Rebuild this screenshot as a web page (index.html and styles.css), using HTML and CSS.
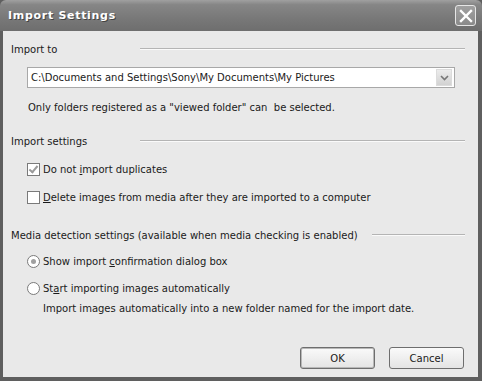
FILE: index.html
```html
<!DOCTYPE html>
<html lang="en">
<head>
    <meta charset="UTF-8">
    <title>Import Settings</title>
    <link rel="stylesheet" href="styles.css">
</head>
<body>
    <div class="window">
        <div class="title-bar">
            <span class="title">Import Settings</span>
            <span class="close-btn">
                <svg width="14" height="14" viewBox="0 0 14 14">
                    <path d="M2 2 L12 12 M12 2 L2 12" stroke="#fff" stroke-width="2.4" stroke-linecap="square"/>
                </svg>
            </span>
        </div>

        <div class="content">
            <div class="group-head">
                <span>Import to</span>
                <span class="rule"></span>
            </div>
            <div class="group-body">
                <div class="select">
                    <span class="select-text">C:\Documents and Settings\Sony\My Documents\My Pictures</span>
                    <span class="select-arrow">
                        <svg width="9" height="6" viewBox="0 0 9 6">
                            <path d="M1 1 L4.5 4.5 L8 1" stroke="#777" stroke-width="1.6" fill="none"/>
                        </svg>
                    </span>
                </div>
                <p class="note">Only folders registered as a "viewed folder" can&nbsp; be selected.</p>
            </div>

            <div class="group-head">
                <span>Import settings</span>
                <span class="rule"></span>
            </div>
            <div class="group-body options">
                <label class="option"><span class="check checked"></span><span>Do not <u>i</u>mport duplicates</span></label>
                <label class="option"><span class="check"></span><span><u>D</u>elete images from media after they are imported to a computer</span></label>
            </div>

            <div class="group-head">
                <span>Media detection settings (available when media checking is enabled)</span>
                <span class="rule"></span>
            </div>
            <div class="group-body options media">
                <label class="option"><span class="radio checked"></span><span>Show import <u>c</u>onfirmation dialog box</span></label>
                <div>
                    <label class="option"><span class="radio"></span><span>St<u>a</u>rt importing images automatically</span></label>
                    <p class="sub-note">Import images automatically into a new folder named for the import date.</p>
                </div>
            </div>

            <div class="buttons">
                <button class="btn default">OK</button>
                <button class="btn">Cancel</button>
            </div>
        </div>
    </div>
</body>
</html>
```

FILE: styles.css
```css
:root {
    --frame-color: #5f5f5f;
    --face-color: #e9e9e9;
    --rule-color: #b4b4b4;
    --text-color: #1a1a1a;
    --font-family: 'DejaVu Sans', sans-serif;
}

body {
    margin: 0;
    padding: 0;
    font-family: var(--font-family);
    font-size: 10px;
    color: var(--text-color);
}

.window {
    width: 482px;
    height: 381px;
    box-sizing: border-box;
    display: flex;
    flex-direction: column;
    background: var(--frame-color);
    padding: 0 4px 4px 3px;
}

.title-bar {
    height: 31px;
    flex: none;
    display: flex;
    align-items: center;
    justify-content: space-between;
    margin: 0 -4px 0 -3px;
    padding: 0 6px 0 8px;
    background: linear-gradient(to bottom, #a0a0a0 0%, #868686 15%, #787878 60%, #6e6e6e 100%);
    border-radius: 6px 6px 0 0;
}

.title {
    color: #fff;
    font-weight: bold;
    font-size: 11px;
    letter-spacing: 0.7px;
    text-shadow: 1px 1px 0 #444;
}

.close-btn {
    width: 19px;
    height: 19px;
    border: 1px solid #e6e6e6;
    border-radius: 3px;
    display: flex;
    align-items: center;
    justify-content: center;
    background: linear-gradient(to bottom, #a0a0a0, #8a8a8a);
}

.content {
    flex: 1;
    background: var(--face-color);
    display: flex;
    flex-direction: column;
    padding: 11px 13px 8px 8px;
}

.group-head {
    display: flex;
    align-items: center;
    gap: 14px;
    height: 14px;
}

.group-head span:first-child {
    min-width: 115px;
}

.rule {
    flex: 1;
    height: 0;
    border-top: 1px solid var(--rule-color);
    border-bottom: 1px solid #fafafa;
}

.group-body {
    padding-left: 16px;
}

.select {
    margin-top: 11px;
    width: 428px;
    height: 21px;
    box-sizing: border-box;
    border: 1px solid #a8a8a8;
    background: #fff;
    display: flex;
    align-items: center;
    justify-content: space-between;
    padding: 0 2px 0 3px;
}

.select-arrow {
    width: 16px;
    height: 17px;
    background: linear-gradient(to bottom, #ececec, #d2d2d2);
    border: 1px solid #dcdcdc;
    box-sizing: border-box;
    display: flex;
    align-items: center;
    justify-content: center;
}

.note {
    margin: 14px 0 21px 1px;
}

.options {
    display: flex;
    flex-direction: column;
    gap: 15px;
    padding-top: 15px;
    margin-bottom: 24px;
}

.options.media {
    gap: 14px;
    padding-top: 13px;
}

.option {
    display: flex;
    align-items: center;
    gap: 3px;
}

.check {
    width: 13px;
    height: 13px;
    box-sizing: border-box;
    border: 1px solid #7a7a7a;
    background: #fff;
    position: relative;
}

.check.checked::after {
    content: "";
    position: absolute;
    left: 3px;
    top: 0px;
    width: 3px;
    height: 7px;
    border: solid #9a9a9a;
    border-width: 0 2px 2px 0;
    transform: rotate(40deg);
}

.radio {
    width: 13px;
    height: 13px;
    box-sizing: border-box;
    border: 1px solid #7a7a7a;
    border-radius: 50%;
    background: #fff;
    position: relative;
}

.radio.checked::after {
    content: "";
    position: absolute;
    left: 3px;
    top: 3px;
    width: 5px;
    height: 5px;
    border-radius: 50%;
    background: #a0a0a0;
}

.sub-note {
    margin: 8px 0 0 16px;
}

.buttons {
    margin-top: auto;
    display: flex;
    justify-content: flex-end;
    gap: 14px;
    padding-right: 1px;
}

.btn {
    width: 75px;
    height: 22px;
    font-family: var(--font-family);
    font-size: 10px;
    color: var(--text-color);
    background: linear-gradient(to bottom, #fafafa, #e4e4e4);
    border: 1px solid #6e6e6e;
    border-radius: 3px;
}

.btn.default {
    box-shadow: inset 0 0 0 1px #b8b8b8;
}
```
